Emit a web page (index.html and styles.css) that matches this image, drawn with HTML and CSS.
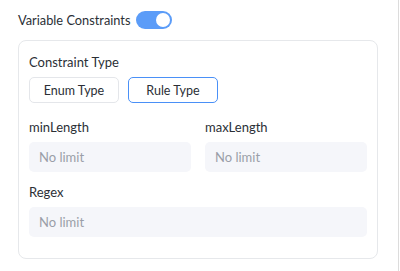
FILE: index.html
```html
<!DOCTYPE html>
<html lang="en">
<head>
    <meta charset="UTF-8">
    <meta name="viewport" content="width=device-width, initial-scale=1.0">
    <title>Variable Constraints</title>
    <link rel="stylesheet" href="styles.css">
</head>
<body>
    <div class="page">
        <div class="switch-row">
            <span class="switch-label">Variable Constraints</span>
            <button class="switch switch-on" type="button"><span class="switch-knob"></span></button>
        </div>

        <div class="card">
            <div class="field-label">Constraint Type</div>
            <div class="type-buttons">
                <button class="type-button" type="button">Enum Type</button>
                <button class="type-button active" type="button">Rule Type</button>
            </div>

            <div class="field-grid">
                <div class="field">
                    <div class="field-label">minLength</div>
                    <input class="field-input" type="text" placeholder="No limit">
                </div>
                <div class="field">
                    <div class="field-label">maxLength</div>
                    <input class="field-input" type="text" placeholder="No limit">
                </div>
            </div>

            <div class="field">
                <div class="field-label">Regex</div>
                <input class="field-input" type="text" placeholder="No limit">
            </div>
        </div>
    </div>
</body>
</html>
```

FILE: styles.css
```css
body {
    margin: 0;
    padding: 0;
    background-color: #fff;
    color: #2b2f36;
    font-family: Lato, "Noto Sans CJK SC", sans-serif;
    font-size: 13px;
}
.page {
    width: 399px;
    height: 271px;
    border-right: 1px solid #dcdcdc;
    box-sizing: border-box;
    padding: 11px 0 0 18px;
}
.switch-row {
    display: flex;
    align-items: center;
    gap: 5px;
    height: 18px;
}
.switch-label {
    line-height: 18px;
    font-size: 12.8px;
}
.switch {
    position: relative;
    width: 36px;
    height: 18px;
    padding: 0;
    border: none;
    border-radius: 9px;
    background-color: #5b9cf8;
    cursor: pointer;
}
.switch-knob {
    position: absolute;
    top: 2px;
    right: 2px;
    width: 14px;
    height: 14px;
    border-radius: 50%;
    background-color: #fff;
}
.card {
    width: 360px;
    box-sizing: border-box;
    margin-top: 11px;
    padding: 10px 10px 21px;
    border: 1px solid #e6e8eb;
    border-radius: 8px;
}
.field-label {
    line-height: 22px;
    margin-bottom: 4px;
}
.type-buttons {
    display: flex;
    gap: 9px;
    margin-top: 3px;
    margin-bottom: 13px;
}
.type-button {
    box-sizing: border-box;
    width: 90px;
    height: 26px;
    padding: 0;
    border: 1px solid #e4e6ea;
    border-radius: 5px;
    background-color: #fff;
    color: #2b2f36;
    font-family: inherit;
    font-size: 12.5px;
    cursor: pointer;
}
.type-button.active {
    border-color: #4a90f7;
}
.field-grid {
    display: grid;
    grid-template-columns: 1fr 1fr;
    gap: 14px;
    margin-bottom: 9px;
}
.field-input {
    display: block;
    width: 100%;
    height: 30px;
    box-sizing: border-box;
    padding: 0 10px;
    border: none;
    border-radius: 5px;
    background-color: #f5f6fa;
    color: #2b2f36;
    font-family: inherit;
    font-size: 13px;
    outline: none;
}
.field-input::placeholder {
    color: #9a9ea8;
}
```
